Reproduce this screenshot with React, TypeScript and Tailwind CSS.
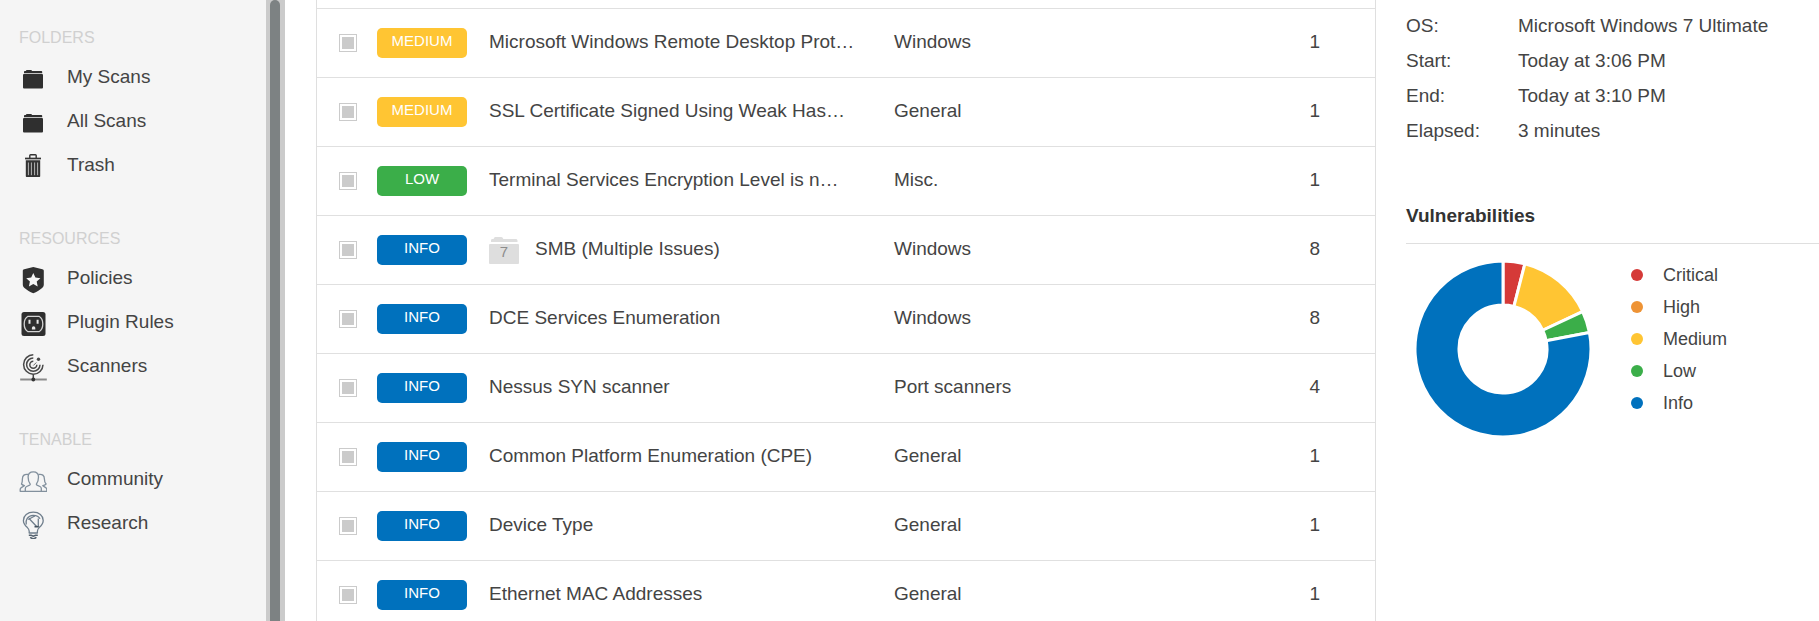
import type { ReactNode } from "react";
import { clsx } from "clsx";

type Severity = "medium" | "low" | "info";

interface Finding {
  severity: Severity;
  name: string;
  family: string;
  count: number;
  group?: number;
}

const findings: Finding[] = [
  { severity: "medium", name: "Microsoft Windows Remote Desktop Prot…", family: "Windows", count: 1 },
  { severity: "medium", name: "SSL Certificate Signed Using Weak Has…", family: "General", count: 1 },
  { severity: "low", name: "Terminal Services Encryption Level is n…", family: "Misc.", count: 1 },
  { severity: "info", name: "SMB (Multiple Issues)", family: "Windows", count: 8, group: 7 },
  { severity: "info", name: "DCE Services Enumeration", family: "Windows", count: 8 },
  { severity: "info", name: "Nessus SYN scanner", family: "Port scanners", count: 4 },
  { severity: "info", name: "Common Platform Enumeration (CPE)", family: "General", count: 1 },
  { severity: "info", name: "Device Type", family: "General", count: 1 },
  { severity: "info", name: "Ethernet MAC Addresses", family: "General", count: 1 },
];

const badges: Record<Severity, { text: string; color: string }> = {
  medium: { text: "MEDIUM", color: "bg-[#ffc533]" },
  low: { text: "LOW", color: "bg-[#3bae49]" },
  info: { text: "INFO", color: "bg-[#0071bd]" },
};

const details = [
  { label: "OS:", value: "Microsoft Windows 7 Ultimate" },
  { label: "Start:", value: "Today at 3:06 PM" },
  { label: "End:", value: "Today at 3:10 PM" },
  { label: "Elapsed:", value: "3 minutes" },
];

const slices = [
  { label: "Critical", percent: 4, color: "#d53a38", dot: "bg-[#d53a38]" },
  { label: "High", percent: 0, color: "#ee9335", dot: "bg-[#ee9335]" },
  { label: "Medium", percent: 14, color: "#ffc533", dot: "bg-[#ffc533]" },
  { label: "Low", percent: 4, color: "#3bae49", dot: "bg-[#3bae49]" },
  { label: "Info", percent: 78, color: "#0071bd", dot: "bg-[#0071bd]" },
];

/* Sidebar icons share a 28x32 box */
function Icon({ children }: { children: ReactNode }) {
  return (
    <svg viewBox="0 0 28 32" className="h-8 w-7 shrink-0" fill="none" aria-hidden="true">
      {children}
    </svg>
  );
}

const FolderIcon = () => (
  <Icon>
    <path d="M5 12.2V11c0-.6.4-1 1-1h.8c.3-.8.8-1 1.4-1h3.6c.7 0 1 .4 1.3 1H22c.8 0 1.2.4 1.2 1v1.2z" fill="#2f2f2f" />
    <rect x="4" y="13" width="20" height="14.4" rx="1" fill="#2f2f2f" />
  </Icon>
);

const TrashIcon = () => (
  <Icon>
    <path d="M10.8 9V6.6c0-.5.4-.8.8-.8h4.8c.5 0 .8.3.8.8V9" stroke="#333" strokeWidth="1.4" />
    <path d="M6 9.5h16" stroke="#333" strokeWidth="1.7" />
    <path d="M6.8 11.3h14.4V27c0 .6-.4 1-1 1H7.8c-.6 0-1-.4-1-1z" fill="#333" />
    <path d="M9.4 13.500v12.700M12.400 13.500v12.700M15.600 13.500v12.700M18.600 13.500v12.700" stroke="#b5b5b5" strokeWidth="1" />
  </Icon>
);

const ShieldIcon = () => (
  <Icon>
    <path d="M14.3 5 23.4 7.3c.9.2 1.4.8 1.4 1.7v13.500c0 1.500-.6 2.500-1.700 3.400-2.600 2.300-5.400 4-8.800 5.400-3.400-1.400-6.200-3.100-8.800-5.400-1.100-.9-1.700-1.900-1.700-3.400V9c0-.9.5-1.500 1.400-1.700z" fill="#303030" />
    <path d="m14.3 11 2.1 4.600 5 .6-3.700 3.400 1 4.900-4.400-2.500-4.400 2.500 1-4.900-3.700-3.400 5-.6z" fill="#f5f5f5" />
  </Icon>
);

const OutletIcon = () => (
  <Icon>
    <rect x="2.5" y="6" width="24" height="24" rx="2.5" fill="#2f2f2f" />
    <path d="M9 10.300h11c2.600 1.500 3.800 4.200 3.800 7.700s-1.200 6.200-3.800 7.700H9c-2.600-1.500-3.800-4.200-3.800-7.700S6.400 11.800 9 10.300z" stroke="#d4d4d4" strokeWidth="1.3" />
    <path d="M10.5 13.800v4M18.600 13.800v4" stroke="#e8e8e8" strokeWidth="2" />
    <path d="M12.9 23.500v-1.600a1.700 1.700 0 0 1 3.400 0v1.600z" fill="#e8e8e8" />
  </Icon>
);

const RadarIcon = () => (
  <Icon>
    <g stroke="#484848" strokeWidth="1.5">
      <path d="M14.3 4.800A9.700 9.700 0 1 0 24 14.700" />
      <path d="M14.3 7.900A6.700 6.700 0 1 0 21 14.700" />
      <path d="M14.3 11.200A3.500 3.500 0 1 0 17.800 14.700" />
      <path d="M14.3 24.500v4" />
    </g>
    <path d="m14.3 15.500 3-3" stroke="#666" />
    <circle cx="19.5" cy="9.3" r="1.7" fill="#484848" />
    <path d="M1.2 29.500h26.600" stroke="#8a8a8a" strokeWidth="2" />
    <circle cx="14.3" cy="29.5" r="1.9" fill="#333" />
  </Icon>
);

const PeopleIcon = () => (
  <Icon>
    <g stroke="#82909d" strokeWidth="1.3" strokeLinejoin="round">
      <path d="M6.3 28.300v-2.800c0-1 .5-1.600 1.400-2l2.900-1.300c.6-.3.8-.8.5-1.400-1.600-2.100-2-4.100-2-6.700 0-3.300 1.900-5.300 5.200-5.300s5.200 2 5.200 5.300c0 2.600-.4 4.600-2 6.700-.3.600-.1 1.100.5 1.400l2.900 1.300c.9.400 1.400 1 1.400 2v2.800" />
      <path d="M9.400 11.500c-3.900-.8-6 1-6 4.400 0 2.200-.3 3.800-.9 5.100.8 1 1.800 1.400 2.900 1.700L2.300 24.600c-.8.400-1.100 1-1.100 1.900v1.800h26.600v-1.800c0-.9-.3-1.500-1.100-1.900l-2.900-1.900c1.300-.3 2.500-.9 3.300-1.700-1.200-1.300-1.700-2.900-1.700-5.100 0-3.400-2.100-5.200-6-4.400" />
    </g>
  </Icon>
);

const BulbIcon = () => (
  <Icon>
    <g stroke="#6f7e8c" strokeWidth="1.3" strokeLinejoin="round">
      <path d="M10.2 26v-1.800c0-1.500-.7-2.500-1.800-3.600-2.500-2.300-4-4.200-4-7.200C4.400 8.600 8.600 5.200 14.300 5.200s9.900 3.400 9.900 8.200c0 3-1.500 4.900-4 7.200-1.100 1.100-1.800 2.100-1.800 3.600V26z" />
      <path d="M7.2 17.500c-.9-4.600 1.300-8.800 7-9.200 3.700 0 5.700 1.200 6.800 3.500" />
      <path d="M9.800 11.300 17.600 19.500M9.200 12.500l6.600-3.500M19.300 11.500v8" />
    </g>
    <path d="M15.5 19.700h4.300" stroke="#44515e" strokeWidth="1.6" />
    <path d="M9.8 28.200h2.300l2.200 1 2.200-1h2.300M11.200 30.300c1.800 1.600 4.400 1.600 6.200 0" stroke="#55626f" strokeWidth="1.5" />
  </Icon>
);

const sections = [
  {
    title: "FOLDERS",
    items: [
      { label: "My Scans", icon: <FolderIcon /> },
      { label: "All Scans", icon: <FolderIcon /> },
      { label: "Trash", icon: <TrashIcon /> },
    ],
  },
  {
    title: "RESOURCES",
    items: [
      { label: "Policies", icon: <ShieldIcon /> },
      { label: "Plugin Rules", icon: <OutletIcon /> },
      { label: "Scanners", icon: <RadarIcon /> },
    ],
  },
  {
    title: "TENABLE",
    items: [
      { label: "Community", icon: <PeopleIcon /> },
      { label: "Research", icon: <BulbIcon /> },
    ],
  },
];

function Sidebar() {
  return (
    <nav className="flex w-[266px] shrink-0 flex-col gap-[34px] bg-[#f5f5f5] pt-5">
      {sections.map((section) => (
        <section key={section.title}>
          <h2 className="h-[35px] pl-[19px] text-base leading-9 text-[#d0d0d0]">{section.title}</h2>
          <ul>
            {section.items.map((item) => (
              <li key={item.label}>
                <a href="#" className="flex h-11 items-center gap-5 pl-[19px]">
                  {item.icon}
                  {item.label}
                </a>
              </li>
            ))}
          </ul>
        </section>
      ))}
    </nav>
  );
}

function GroupFolder({ count }: { count: number }) {
  return (
    <span className="relative mt-0.5 block h-7 w-[30px] text-center text-[15px] leading-8 text-[#8c8c8c]">
      <svg viewBox="0 0 30 28" className="absolute inset-0 h-7 w-[30px]" fill="#dedede" aria-hidden="true">
        <path d="M2 6V4.500C2 3.500 2.500 3 3.400 3h1.200C5 1.500 5.700 1 6.800 1h5.400c1.100 0 1.700.7 2.100 2h12.300c1.200 0 1.900.6 1.900 1.700V6z" />
        <rect y="8" width="30" height="20" rx="1" />
      </svg>
      <span className="relative">{count}</span>
    </span>
  );
}

function FindingsTable() {
  return (
    <div className="min-w-0 flex-1 border-x border-[#dfdfdf] pt-2">
      <table className="w-full table-fixed border-t border-[#e0e0e0] text-left">
        <colgroup>
          <col className="w-[60px]" />
          <col className="w-[112px]" />
          <col className="w-[405px]" />
          <col />
          <col className="w-[120px]" />
        </colgroup>
        <tbody>
          {findings.map((f) => (
            <tr key={f.name} className="h-[69px] border-b border-[#e0e0e0]">
              <td className="pl-[22px]">
                <input
                  type="checkbox"
                  aria-label={`Select ${f.name}`}
                  className="block size-[18px] appearance-none border border-[#cbcbcb] bg-[#cbcbcb] bg-clip-content p-[2px]"
                />
              </td>
              <td>
                <span
                  className={clsx(
                    "flex h-[30px] w-[90px] items-center justify-center rounded-[5px] pb-1 text-[15px] text-white",
                    badges[f.severity].color,
                  )}
                >
                  {badges[f.severity].text}
                </span>
              </td>
              <td className="pb-0.5">
                <span className="flex items-center gap-4 whitespace-nowrap">
                  {f.group && <GroupFolder count={f.group} />}
                  {f.name}
                </span>
              </td>
              <td className="pb-0.5">{f.family}</td>
              <td className="pr-[55px] pb-0.5 text-right">{f.count}</td>
            </tr>
          ))}
        </tbody>
      </table>
    </div>
  );
}

function point(radius: number, percent: number) {
  const angle = (percent / 100) * 2 * Math.PI;
  return `${90 + radius * Math.sin(angle)} ${90 - radius * Math.cos(angle)}`;
}

function Donut() {
  let start = 0;
  return (
    <svg viewBox="0 0 180 180" className="size-[180px]" role="img" aria-label="Vulnerabilities by severity">
      {slices.map((s) => {
        if (!s.percent) return null;
        const from = start;
        const to = start + s.percent;
        const large = s.percent > 50 ? 1 : 0;
        start = to;
        return (
          <path
            key={s.label}
            d={`M${point(88, from)}A88 88 0 ${large} 1 ${point(88, to)}L${point(44, to)}A44 44 0 ${large} 0 ${point(44, from)}Z`}
            fill={s.color}
            stroke="#fff"
            strokeWidth="3"
          />
        );
      })}
    </svg>
  );
}

function Summary() {
  return (
    <aside className="w-[443px] shrink-0 pt-2 pl-[30px]">
      <dl>
        {details.map((d) => (
          <div key={d.label} className="flex h-[35px] items-center">
            <dt className="w-28">{d.label}</dt>
            <dd className="whitespace-nowrap">{d.value}</dd>
          </div>
        ))}
      </dl>
      <h3 className="mt-[54px] border-b border-[#dfdfdf] pb-[13px] leading-7 font-bold text-[#333]">Vulnerabilities</h3>
      <div className="flex gap-[38px] pt-[15px] pl-[7px]">
        <Donut />
        <ul className="text-[18px] leading-8">
          {slices.map((s) => (
            <li key={s.label} className="flex items-center gap-5">
              <span className={clsx("size-3 rounded-full", s.dot)} />
              {s.label}
            </li>
          ))}
        </ul>
      </div>
    </aside>
  );
}

export default function App() {
  return (
    <div className="flex h-screen overflow-hidden bg-white font-['Liberation_Sans',Arial,sans-serif] text-[19px] leading-6 text-[#444]">
      <Sidebar />
      <div className="mr-[31px] flex w-[19px] shrink-0 bg-[#cbcbcb] pl-1">
        <div className="w-[10px] rounded-t-full bg-[#7d8283]" />
      </div>
      <FindingsTable />
      <Summary />
    </div>
  );
}
